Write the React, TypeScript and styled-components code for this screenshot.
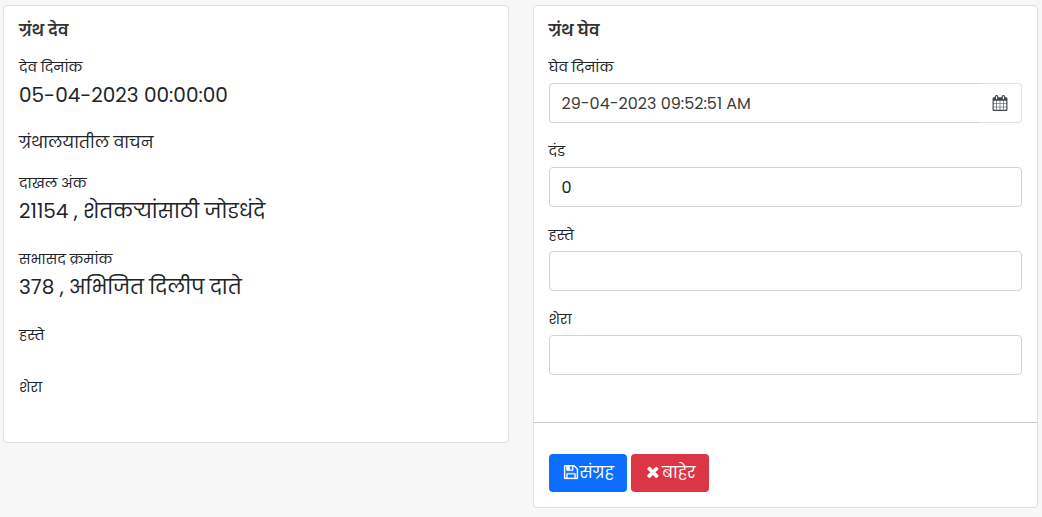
import React from "react";
import styled, { createGlobalStyle } from "styled-components";

const GlobalStyle = createGlobalStyle`
  *, *::before, *::after { box-sizing: border-box; }
  body {
    margin: 0;
    background: #f7f7f7;
    color: #212529;
    font-family: Poppins, Inter, "Noto Sans", "Noto Sans Devanagari", sans-serif;
    font-size: 16px;
    line-height: 24px;
  }
  input, button { font: inherit; }
`;

const Page = styled.main`
  display: flex;
  align-items: flex-start;
  gap: 24px;
  padding: 5px 4px 8px 3px;
`;

const Card = styled.section`
  flex: 1 1 0;
  min-width: 0;
  background: #fff;
  border: 1px solid #dfdfdf;
  border-radius: 4px;
`;

const CardBody = styled.div<{ $bottom: number }>`
  padding: 13px 15px ${(p) => p.$bottom}px;
`;

const Title = styled.h2`
  margin: 0 0 14px;
  color: #333;
  font-size: 16px;
  line-height: 24px;
  font-weight: 600;
`;

const Details = styled.dl`
  display: flex;
  flex-direction: column;
  gap: 26px;
  margin: 0;
`;

const Term = styled.dt`
  margin-bottom: 5px;
  font-size: 14px;
  line-height: 21px;
`;

const Value = styled.dd`
  margin: 0;
  font-size: 20px;
  line-height: 24px;
`;

const Note = styled.p`
  margin: 25px 0 20px;
  font-size: 16px;
  line-height: 21px;
`;

const Fields = styled.div`
  display: flex;
  flex-direction: column;
  gap: 18px;
`;

const Label = styled.label`
  display: block;
  margin-bottom: 5px;
  font-size: 14px;
  line-height: 21px;
`;

const InputGroup = styled.div`
  display: flex;
`;

const Input = styled.input<{ $joined?: boolean }>`
  flex: 1;
  min-width: 0;
  height: 40px;
  padding: 0 12px;
  border: 1px solid #ced4da;
  border-right-width: ${(p) => (p.$joined ? 0 : 1)}px;
  border-radius: ${(p) => (p.$joined ? "4px 0 0 4px" : "4px")};
  background: #fff;
  color: ${(p) => (p.$joined ? "#3b3b3b" : "#212529")};
`;

const PickerButton = styled.button`
  display: flex;
  align-items: center;
  padding: 0 13px 0 12px;
  border: 1px solid #dfe1e5;
  border-left: 0;
  border-radius: 0 4px 4px 0;
  background: #fff;
  color: #3e4450;
`;

const Footer = styled.footer`
  display: flex;
  gap: 4px;
  padding: 31px 15px 15px;
  border-top: 1px solid #c8c8c8;
`;

const ActionButton = styled.button<{ $color: string }>`
  display: flex;
  align-items: center;
  gap: 1px;
  height: 38px;
  padding: 0 13px 0 14px;
  border: 0;
  border-radius: 4px;
  background: ${(p) => p.$color};
  color: #fff;
`;

const Glyph = styled.svg`
  flex: none;
  fill: currentColor;
`;

const CalendarIcon = () => (
  <Glyph width="16" height="16" viewBox="64 0 1664 1792" aria-hidden="true">
    <path d="M192 1664h288v-288h-288v288zm352 0h320v-288h-320v288zm-352-352h288v-320h-288v320zm352 0h320v-320h-320v320zm-352-384h288v-288h-288v288zm736 736h320v-288h-320v288zm-384-736h320v-288h-320v288zm768 736h288v-288h-288v288zm-384-352h320v-320h-320v320zm-352-864v-288q0-13-9.500-22.500t-22.500-9.500h-64q-13 0-22.500 9.500t-9.500 22.500v288q0 13 9.500 22.500t22.500 9.500h64q13 0 22.500-9.500t9.500-22.500zm736 864h288v-320h-288v320zm-384-384h320v-288h-320v288zm384 0h288v-288h-288v288zm32-480v-288q0-13-9.500-22.500t-22.500-9.500h-64q-13 0-22.500 9.500t-9.500 22.500v288q0 13 9.500 22.500t22.500 9.500h64q13 0 22.500-9.500t9.500-22.500zm384-64v1280q0 52-38 90t-90 38h-1408q-52 0-90-38t-38-90v-1280q0-52 38-90t90-38h128v-96q0-66 47-113t113-47h64q66 0 113 47t47 113v96h384v-96q0-66 47-113t113-47h64q66 0 113 47t47 113v96h128q52 0 90 38t38 90z" />
  </Glyph>
);

const SaveIcon = () => (
  <Glyph width="16" height="16" viewBox="16 240 1760 1760" stroke="currentColor" strokeWidth="30" aria-hidden="true">
    <path d="M512 1536h768v-384h-768v384zm896 0h128v-896q0-14-10-38.500t-20-34.500l-281-281q-10-10-34-20t-39-10v416q0 40-28 68t-68 28h-576q-40 0-68-28t-28-68v-416h-128v1280h128v-416q0-40 28-68t68-28h832q40 0 68 28t28 68v416zm-384-928v-320q0-13-9.500-22.500t-22.500-9.500h-192q-13 0-22.500 9.500t-9.500 22.500v320q0 13 9.500 22.500t22.500 9.500h192q13 0 22.500-9.500t9.500-22.500zm640 32v928q0 40-28 68t-68 28h-1344q-40 0-68-28t-28-68v-1344q0-40 28-68t68-28h928q40 0 88 20t76 48l280 280q28 28 48 76t20 88z" transform="translate(0 112)" />
  </Glyph>
);

const CloseIcon = () => (
  <Glyph width="16" height="16" viewBox="60 180 1700 1700" aria-hidden="true">
    <path d="M1490 1322q0 40-28 68l-136 136q-28 28-68 28t-68-28l-294-294-294 294q-28 28-68 28t-68-28l-136-136q-28-28-28-68t28-68l294-294-294-294q-28-28-28-68t28-68l136-136q28-28 68-28t68 28l294 294 294-294q28-28 68-28t68 28l136 136q28 28 28 68t-28 68l-294 294 294 294q28 28 28 68z" />
  </Glyph>
);

const loanDetails = [
  { term: "दाखल अंक", value: "21154 , शेतकऱ्यांसाठी जोडधंदे" },
  { term: "सभासद क्रमांक", value: "378 , अभिजित दिलीप दाते" },
  { term: "हस्ते", value: "" },
  { term: "शेरा", value: "" },
];

export default function App() {
  return (
    <>
      <GlobalStyle />
      <Page>
        <Card>
          <CardBody $bottom={39}>
            <Title>ग्रंथ देव</Title>
            <Details>
              <div>
                <Term>देव दिनांक</Term>
                <Value>05-04-2023 00:00:00</Value>
              </div>
            </Details>
            <Note>ग्रंथालयातील वाचन</Note>
            <Details>
              {loanDetails.map((d) => (
                <div key={d.term}>
                  <Term>{d.term}</Term>
                  <Value>{d.value}</Value>
                </div>
              ))}
            </Details>
          </CardBody>
        </Card>
        <Card>
          <CardBody $bottom={47}>
            <Title>ग्रंथ घेव</Title>
            <Fields>
              <div>
                <Label htmlFor="return-date">घेव दिनांक</Label>
                <InputGroup>
                  <Input id="return-date" $joined defaultValue="29-04-2023 09:52:51 AM" />
                  <PickerButton type="button" aria-label="दिनांक निवडा">
                    <CalendarIcon />
                  </PickerButton>
                </InputGroup>
              </div>
              <div>
                <Label htmlFor="fine">दंड</Label>
                <InputGroup>
                  <Input id="fine" defaultValue="0" />
                </InputGroup>
              </div>
              <div>
                <Label htmlFor="by-hand">हस्ते</Label>
                <InputGroup>
                  <Input id="by-hand" />
                </InputGroup>
              </div>
              <div>
                <Label htmlFor="remark">शेरा</Label>
                <InputGroup>
                  <Input id="remark" />
                </InputGroup>
              </div>
            </Fields>
          </CardBody>
          <Footer>
            <ActionButton type="button" $color="#0d6efd">
              <SaveIcon />
              संग्रह
            </ActionButton>
            <ActionButton type="button" $color="#dc3545">
              <CloseIcon />
              बाहेर
            </ActionButton>
          </Footer>
        </Card>
      </Page>
    </>
  );
}
